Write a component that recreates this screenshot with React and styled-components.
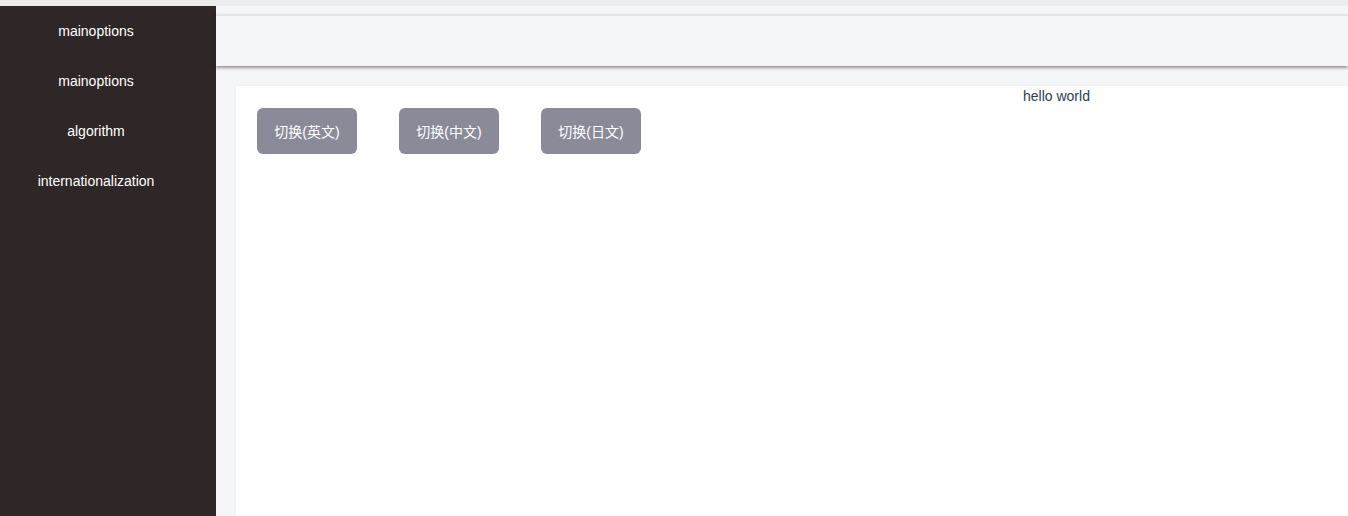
import React from 'react'
import styled, { createGlobalStyle } from 'styled-components'

const GlobalStyle = createGlobalStyle`
  html, body {
    margin: 0;
    padding: 0;
    background: #ececec;
    font-family: "Liberation Sans", "Noto Sans CJK SC", Arial, sans-serif;
    overflow: hidden;
  }
`

const menuItems = ['mainoptions', 'mainoptions', 'algorithm', 'internationalization']
const languages = ['切换(英文)', '切换(中文)', '切换(日文)']

const App = () => {
  return (
    <>
      <GlobalStyle />
      <Layout>
        <Sidebar>
          {menuItems.map((item, i) => (
            <MenuItem key={i}>{item}</MenuItem>
          ))}
        </Sidebar>
        <Main>
          <Header />
          <Card>
            <Greeting>hello world</Greeting>
            <ButtonRow>
              {languages.map((label) => (
                <LangButton key={label}>{label}</LangButton>
              ))}
            </ButtonRow>
          </Card>
        </Main>
      </Layout>
    </>
  )
}

export default App

// styled components

const Layout = styled.div`
  display: flex;
  height: 510px;
  margin-top: 6px;
  width: 1348px;
  overflow: hidden;
`

const Sidebar = styled.nav`
  width: 192px;
  padding-right: 24px;
  flex-shrink: 0;
  background: #2f2727;
  display: flex;
  flex-direction: column;
`

const MenuItem = styled.div`
  height: 50px;
  line-height: 50px;
  text-align: center;
  color: #ffffff;
  font-size: 14px;
`

const Main = styled.main`
  flex: 1;
  display: flex;
  flex-direction: column;
  background: #f5f6f8;
  padding-top: 9px;
  min-width: 0;
`

const Header = styled.header`
  height: 50px;
  flex-shrink: 0;
  background: #f5f6f8;
  border-top: 1px solid #e4e5e8;
  box-shadow: 0 2px 3px rgba(60, 45, 45, 0.45), -2px 0 3px rgba(0, 0, 0, 0.12);
  position: relative;
  z-index: 1;
`

const Card = styled.section`
  flex: 1;
  margin: 20px 0 0 20px;
  background: #ffffff;
  box-shadow: 0 0 3px rgba(0, 0, 0, 0.06);
`

const Greeting = styled.div`
  padding-left: 787px;
  height: 20px;
  line-height: 20px;
  font-size: 14px;
  color: #2c3e50;
  white-space: nowrap;
`

const ButtonRow = styled.div`
  display: flex;
  gap: 42px;
  margin-top: 2px;
  padding-left: 21px;
`

const LangButton = styled.button`
  width: 100px;
  height: 46px;
  border: none;
  border-radius: 6px;
  background: #8b8a99;
  color: #ffffff;
  font-family: "Liberation Sans", "Noto Sans CJK SC", Arial, sans-serif;
  font-size: 14px;
  cursor: pointer;
  padding: 0;
`
